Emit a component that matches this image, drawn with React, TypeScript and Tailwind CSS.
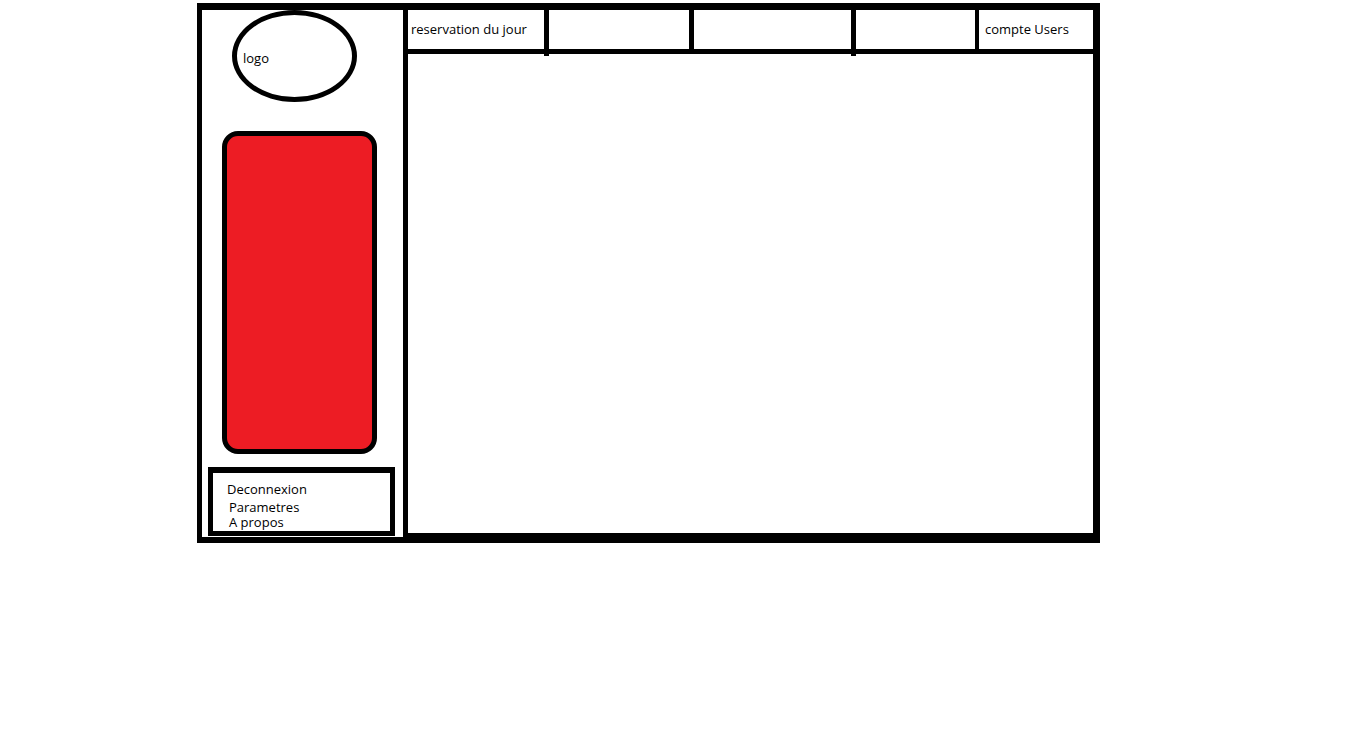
import React from "react";

const tabs = [
  { label: "reservation du jour", width: "w-[136px]", pad: "pl-[3px]" },
  { label: "", width: "w-[140px]", pad: "" },
  { label: "", width: "w-[157px]", pad: "" },
  { label: "", width: "w-[119px]", pad: "" },
];

const Sidebar = () => {
  return (
    <aside className="w-[206px] shrink-0 border-r-[5px] border-black flex flex-col">
      {/* Logo */}
      <div className="ml-[30px] w-[125px] h-[92px] rounded-[50%] border-[5px] border-black flex items-center pl-[6px] pt-[5px]">
        <span>logo</span>
      </div>

      {/* Menu block */}
      <div className="ml-[20px] mt-[29px] w-[155px] h-[323px] rounded-[16px] border-[5px] border-black bg-[#ed1c24]" />

      {/* Bottom links */}
      <div className="ml-[6px] mt-[13px] w-[187px] h-[69px] border-black border-t-[6px] border-x-[5px] border-b-[5px] pl-[14px] pt-[9px] leading-[14px]">
        <div>Deconnexion</div>
        <div className="ml-[2px] mt-[4px]">Parametres</div>
        <div className="ml-[2px] mt-[1px]">A propos</div>
      </div>
    </aside>
  );
};

const TopBar = () => {
  return (
    <div className="h-[44px] border-b-[5px] border-black flex">
      <div className={`${tabs[0].width} ${tabs[0].pad} flex items-center`}>{tabs[0].label}</div>
      <div className="w-[5px] bg-black mb-[-7px]" />
      <div className={tabs[1].width} />
      <div className="w-[5px] bg-black" />
      <div className={tabs[2].width} />
      <div className="w-[5px] bg-black mb-[-7px]" />
      <div className={tabs[3].width} />
      <div className="w-[4px] bg-black" />
      <div className="flex-1 flex items-center pl-[6px] pt-[1px]">compte Users</div>
    </div>
  );
};

const App = () => {
  return (
    <div
      className="w-[1360px] h-[748px] bg-white pt-[3px] pl-[197px] text-[13px] text-black"
      style={{ fontFamily: '"Open Sans", "Noto Sans", sans-serif' }}
    >
      <div className="w-[903px] h-[540px] border-black border-l-[5px] border-t-[7px] border-r-[7px] border-b-[6px] flex">
        <Sidebar />
        <main className="flex-1 flex flex-col border-b-[4px] border-black">
          <TopBar />
          <div className="flex-1" />
        </main>
      </div>
    </div>
  );
};

export default App;
